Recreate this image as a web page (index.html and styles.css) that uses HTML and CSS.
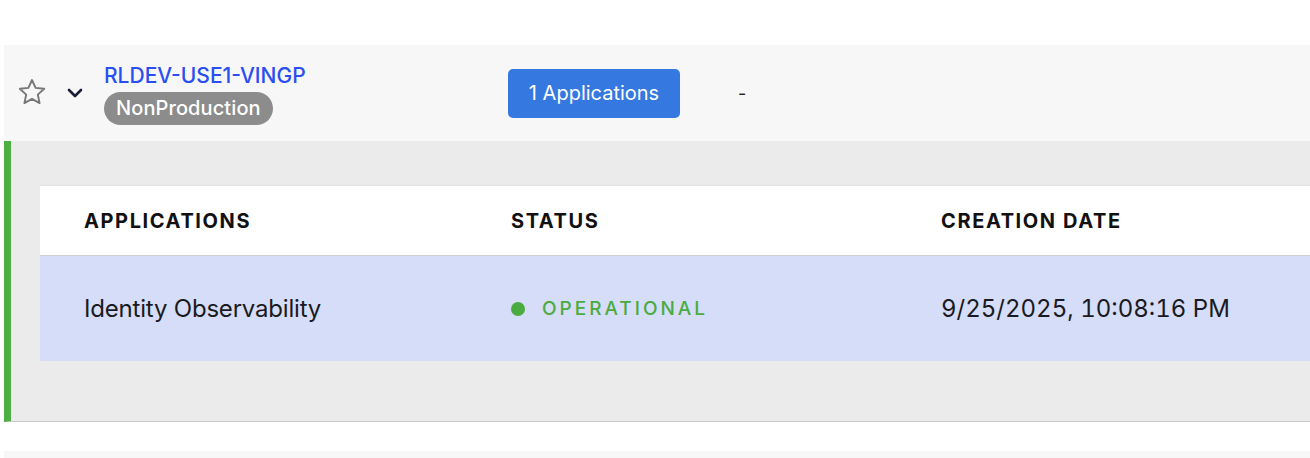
FILE: index.html
```html
<!DOCTYPE html>
<html>
<head>
<meta charset="utf-8">
<link rel="stylesheet" href="styles.css">
</head>
<body>
<div class="page">
  <div class="row">
    <div class="row-icons">
      <svg class="star" width="30" height="28" viewBox="0 0 30 28"><path d="M15 2 L18.6 9.9 L27.2 10.8 L20.8 16.6 L22.6 25.1 L15 20.8 L7.4 25.1 L9.2 16.6 L2.8 10.8 L11.4 9.9 Z" fill="none" stroke="#777" stroke-width="1.9" stroke-linejoin="round"/></svg>
      <svg class="chev" width="16" height="10" viewBox="0 0 16 10"><path d="M2 2 L8 8 L14 2" fill="none" stroke="#1a1f36" stroke-width="2.6" stroke-linecap="round" stroke-linejoin="round"/></svg>
    </div>
    <div class="name-col">
      <a class="name">RLDEV-USE1-VINGP</a>
      <span class="pill">NonProduction</span>
    </div>
    <div class="btn-col"><button class="apps-btn">1 Applications</button></div>
    <div class="dash">-</div>
  </div>
  <div class="expand">
    <div class="table">
      <div class="thead">
        <div class="th">APPLICATIONS</div>
        <div class="th">STATUS</div>
        <div class="th">CREATION DATE</div>
      </div>
      <div class="trow">
        <div class="td">Identity Observability</div>
        <div class="td status"><span class="dot"></span>OPERATIONAL</div>
        <div class="td date">9/25/2025, 10:08:16 PM</div>
      </div>
    </div>
  </div>
  <div class="row next"></div>
</div>
</body>
</html>
```
FILE: styles.css
```css
* { box-sizing: border-box; }
body {
  margin: 0;
  background: #fff;
  font-family: Inter, "Noto Sans", sans-serif;
  overflow: hidden;
}
.page {
  padding: 45px 0 0 4px;
}
.row {
  height: 96px;
  background: #f7f7f7;
  display: flex;
  align-items: center;
}
.row-icons {
  display: flex;
  align-items: center;
  padding-left: 13px;
  width: 100px;
}
.star { display: block; margin-top: -2px; }
.chev { display: block; margin-left: 20px; }
.name-col {
  display: flex;
  flex-direction: column;
  align-items: flex-start;
  width: 404px;
  padding-top: 3px;
}
.name {
  color: #2a4ff0;
  font-size: 21px;
  font-weight: 500;
  line-height: 24px;
  letter-spacing: 0;
}
.pill {
  margin-top: 4px;
  background: #8c8c8c;
  color: #fff;
  font-size: 20px;
  font-weight: 500;
  line-height: 33px;
  padding: 0 12px;
  border-radius: 17px;
  letter-spacing: 0.1px;
}
.btn-col { width: 230px; }
.apps-btn {
  background: #3578e0;
  color: #fff;
  border: none;
  border-radius: 5px;
  height: 49px;
  width: 172px;
  font-family: inherit;
  font-size: 20px;
  font-weight: 400;
  letter-spacing: 0;
  padding: 0;
}
.dash {
  font-size: 18px;
  color: #222;
}
.expand {
  background: #ebebeb;
  border-left: 7px solid #4caf41;
  border-bottom: 1px solid #c8c8c8;
  padding: 44px 0 60px 29px;
}
.table {
  background: #fff;
  border-top: 1px solid #e2e2de;
}
.thead, .trow {
  display: grid;
  grid-template-columns: 427px 430px 1fr;
}
.thead {
  height: 70px;
  align-items: center;
  border-bottom: 1px solid #cfcfcf;
}
.th {
  padding-left: 44px;
  font-size: 20px;
  font-weight: 700;
  color: #111;
  letter-spacing: 1.6px;
}
.trow {
  background: #d6ddf8;
  height: 105px;
  align-items: center;
}
.td {
  padding-left: 44px;
  font-size: 24px;
  color: #1a1a22;
  letter-spacing: -0.2px;
}
.date {
  font-variant-numeric: tabular-nums;
  letter-spacing: 0;
}
.status {
  display: flex;
  align-items: center;
  color: #4aab3f;
  font-size: 19px;
  font-weight: 500;
  letter-spacing: 3px;
}
.dot {
  width: 14px;
  height: 14px;
  border-radius: 50%;
  background: #4aab3f;
  margin-right: 17px;
}
.next {
  margin-top: 29px;
  height: 7px;
}
```
